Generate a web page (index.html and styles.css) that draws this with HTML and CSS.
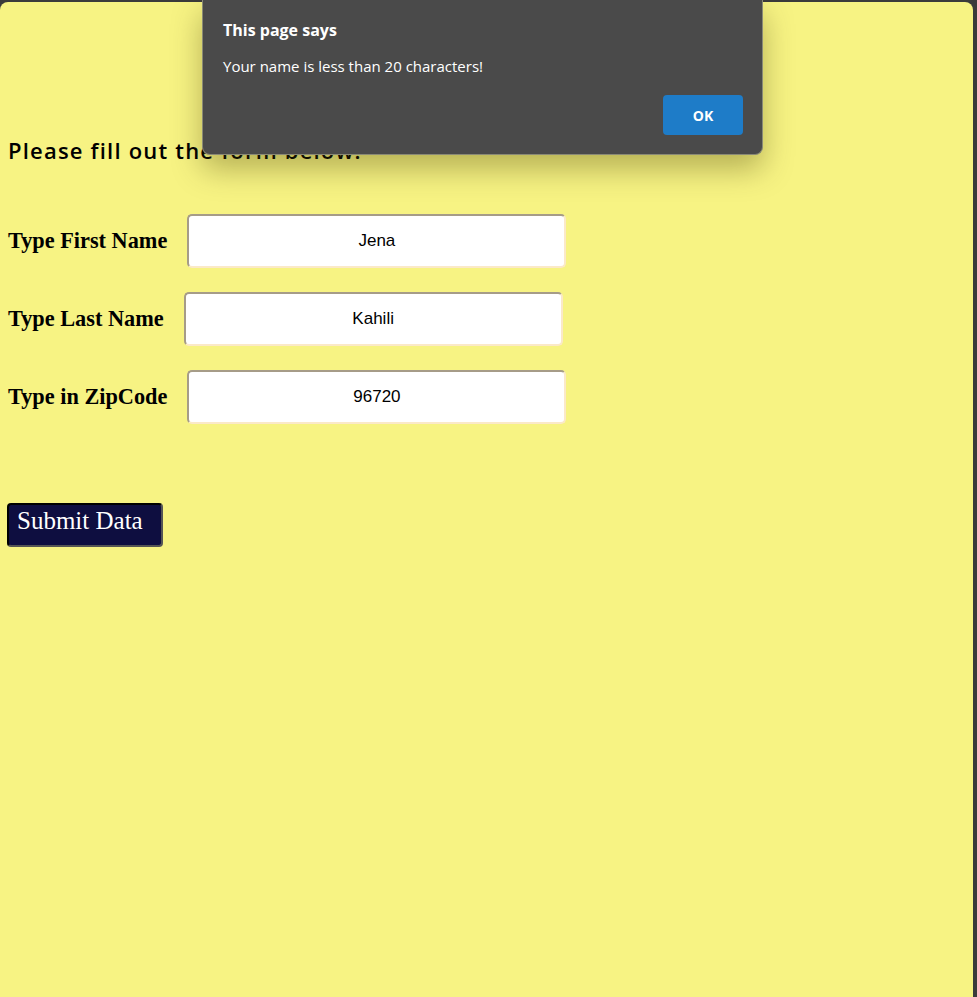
FILE: index.html
```html
<!DOCTYPE html>
<html>
<head>
<meta charset="utf-8">
<link rel="stylesheet" href="styles.css">
</head>
<body>
<div class="frame">
  <div class="page">
    <h2 class="title">Please fill out the form below.</h2>
    <form class="form">
      <div class="row"><label class="lbl">Type First Name</label><input class="field" type="text" value="Jena"></div>
      <div class="row"><label class="lbl">Type Last Name</label><input class="field" type="text" value="Kahili"></div>
      <div class="row"><label class="lbl">Type in ZipCode</label><input class="field" type="text" value="96720"></div>
      <button class="submit" type="button">Submit Data</button>
    </form>
  </div>
  <div class="dialog">
    <div class="dlg-title">This page says</div>
    <div class="dlg-msg">Your name is less than 20 characters!</div>
    <div class="dlg-actions"><button class="ok" type="button">OK</button></div>
  </div>
</div>
</body>
</html>
```
FILE: styles.css
```css
html, body {
  margin: 0;
  padding: 0;
  background: #3b3b3b;
  overflow: hidden;
}
.frame {
  position: relative;
  width: 977px;
  height: 997px;
  padding: 2px 4px 0 0;
  box-sizing: border-box;
  background: #3b3b3b;
}
.page {
  height: 995px;
  background: #f7f383;
  border-radius: 8px 8px 0 0;
  padding: 8px;
  box-sizing: border-box;
}
.title {
  margin: 126px 0 0 0;
  font-family: "Open Sans", "DejaVu Sans", sans-serif;
  font-weight: 600;
  font-size: 22px;
  line-height: 28px;
  color: #000;
  letter-spacing: 1.2px;
}
.form {
  margin-top: 50px;
  display: flex;
  flex-direction: column;
  align-items: flex-start;
  gap: 24px;
}
.row {
  display: flex;
  align-items: center;
}
.lbl {
  font-family: "Liberation Serif", "Times New Roman", serif;
  font-weight: bold;
  font-size: 22.3px;
  color: #000;
  margin-right: 20px;
}
.field {
  width: 379px;
  height: 54px;
  box-sizing: border-box;
  border: 2px solid #a69c88;
  border-right-color: #fbe9c8;
  border-bottom-color: #fbe9c8;
  border-radius: 5px;
  background: #fff;
  text-align: center;
  font-family: "Liberation Sans", Arial, sans-serif;
  font-size: 17px;
  color: #000;
  outline: none;
}
.submit {
  margin-top: 55px;
  margin-left: -1px;
  width: 156px;
  height: 44px;
  box-sizing: border-box;
  background: #0e0e40;
  border: 2px solid #000;
  border-right-color: #555;
  border-bottom-color: #555;
  border-radius: 4px;
  color: #fff;
  font-family: "Liberation Serif", Georgia, serif;
  font-size: 25px;
  text-align: left;
  padding: 0 0 9px 8px;
}
.dialog {
  position: absolute;
  left: 202px;
  top: 0;
  width: 561px;
  height: 155px;
  box-sizing: border-box;
  background: #4a4a4a;
  border: 1px solid #8a8a76;
  border-top: none;
  border-radius: 0 0 8px 8px;
  box-shadow: 0 14px 30px rgba(60, 55, 0, 0.35);
  padding: 19px 20px 0 20px;
  color: #fff;
  font-family: "Open Sans", "Noto Sans", sans-serif;
}
.dlg-title {
  font-weight: 700;
  font-size: 16px;
  line-height: 22px;
}
.dlg-msg {
  margin-top: 14px;
  font-size: 15px;
  line-height: 22px;
}
.dlg-actions {
  display: flex;
  justify-content: flex-end;
  margin-top: 18px;
  margin-right: -1px;
}
.ok {
  width: 80px;
  height: 40px;
  background: #1e7cc8;
  border: none;
  border-radius: 4px;
  color: #fff;
  font-family: "Open Sans", "Noto Sans", sans-serif;
  font-weight: 700;
  font-size: 14px;
}
```
